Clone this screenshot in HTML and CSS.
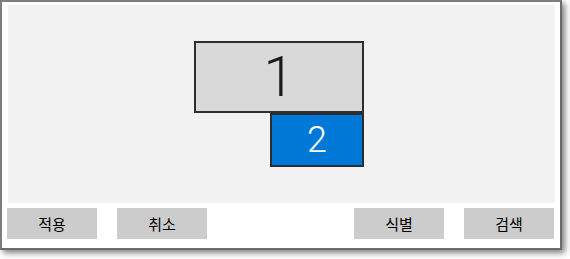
FILE: index.html
```html
<!DOCTYPE html>
<html lang="ko">
<head>
<meta charset="utf-8">
<link rel="stylesheet" href="styles.css">
</head>
<body>
<div class="window">
  <div class="panel">
    <div class="monitor primary"><span>1</span></div>
    <div class="monitor secondary"><span>2</span></div>
  </div>
  <div class="actions">
    <div class="group">
      <button class="btn">적용</button>
      <button class="btn">취소</button>
    </div>
    <div class="group">
      <button class="btn">식별</button>
      <button class="btn">검색</button>
    </div>
  </div>
</div>
</body>
</html>
```
FILE: styles.css
```css
html, body {
  margin: 0;
  padding: 0;
  background: #ffffff;
}
body {
  width: 570px;
  height: 259px;
  overflow: hidden;
  font-family: "Noto Sans CJK KR", "Noto Sans", sans-serif;
}
.window {
  box-sizing: border-box;
  width: 562px;
  height: 250px;
  border: 2px solid #7d7d7d;
  border-right-color: #6a6a6a;
  border-bottom-color: #6a6a6a;
  background: #ffffff;
  box-shadow: 3px 3px 6px rgba(0, 0, 0, 0.5);
  padding: 3px 6px 0 5px;
}
.panel {
  position: relative;
  margin-left: 1px;
  width: 547px;
  height: 198px;
  background: #f2f2f2;
}
.monitor {
  position: absolute;
  box-sizing: border-box;
  border: 2px solid #2e2e2e;
  display: flex;
  align-items: center;
  justify-content: center;
  font-family: Roboto, "Open Sans", sans-serif;
  font-weight: 300;
}
.primary {
  left: 186px;
  top: 36px;
  width: 170px;
  height: 72px;
  background: #d9d9d9;
  color: #1a1a1a;
  font-size: 56px;
}
.secondary {
  left: 262px;
  top: 108px;
  width: 94px;
  height: 54px;
  background: #0078d7;
  border-color: #2a2e33;
  color: #ffffff;
  font-size: 36px;
}
.actions {
  display: flex;
  justify-content: space-between;
  margin-top: 5px;
  width: 547px;
}
.group {
  display: flex;
  gap: 20px;
}
.btn {
  width: 90px;
  height: 31px;
  border: none;
  background: #cccccc;
  color: #000000;
  font-family: "Noto Sans CJK KR", "Noto Sans", sans-serif;
  font-size: 15px;
  padding: 0;
  margin: 0;
  line-height: 31px;
}
```
